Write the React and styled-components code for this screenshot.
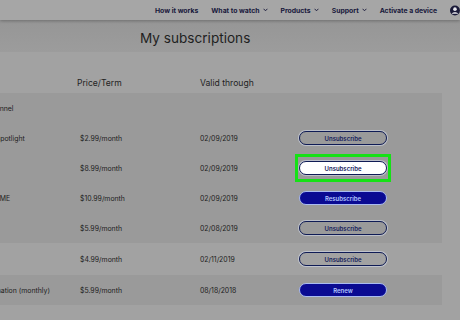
import React from "react";
import styled, { createGlobalStyle } from "styled-components";

const Global = createGlobalStyle`
  html, body {
    margin: 0;
    padding: 0;
    background: #a2a2a2;
    font-family: Inter, "Noto Sans", sans-serif;
    color: #1d1d1d;
    overflow: hidden;
  }
`;

const Page = styled.div`
  width: 460px;
  height: 320px;
  overflow: hidden;
  background: #a2a2a2;
`;

const Header = styled.header`
  position: relative;
  z-index: 1;
  height: 20px;
  background: #a6a6a6;
  box-shadow: 0 1px 3px rgba(0, 0, 0, 0.28);
  display: flex;
  align-items: center;
  gap: 13px;
  padding-left: 155px;
  white-space: nowrap;
`;

const NavItem = styled.span`
  display: flex;
  align-items: center;
  gap: 3px;
  font-size: 6.85px;
  font-weight: 700;
  color: #16163a;
`;

const TitleBand = styled.div`
  height: 32px;
  background: linear-gradient(#969696, #9c9c9c);
  display: flex;
  align-items: center;
  padding-left: 140px;
  padding-top: 4px;
  box-sizing: border-box;
`;

const Title = styled.h1`
  margin: 0;
  font-size: 13.6px;
  font-weight: 400;
  color: #1f1f1f;
`;

const Table = styled.div`
  margin-left: -46px;
  width: 488px;
`;

const HeadRow = styled.div`
  height: 41px;
  display: grid;
  grid-template-columns: 123px 123px 99px 88px;
  align-items: end;
  padding-bottom: 5px;
  box-sizing: border-box;
  font-size: 8.6px;
  color: #1f1f1f;
`;

const Panel = styled.div`
  background: ${(p) => (p.$dark ? "#9a9a9a" : "transparent")};
`;

const Row = styled.div`
  height: ${(p) => p.$h || 30}px;
  display: grid;
  grid-template-columns: 126px 120px 99px 88px;
  align-items: center;
  font-size: 6.9px;
  color: #1d1d1d;
  white-space: nowrap;
`;

const Button = styled.button`
  width: 88px;
  height: 14px;
  border-radius: 8px;
  font-family: inherit;
  font-size: 6px;
  font-weight: 600;
  padding: 0;
  cursor: pointer;
  border: ${(p) =>
    p.$variant === "filled" ? "1px solid #a9bbf2" : "1.5px solid #0f1b55"};
  background: ${(p) =>
    p.$variant === "filled"
      ? "#0a0a92"
      : p.$variant === "white"
      ? "#ffffff"
      : "transparent"};
  color: ${(p) => (p.$variant === "filled" ? "#b3c6ff" : "#14205a")};
  box-shadow: ${(p) =>
    p.$variant === "filled" ? "none" : "0 0 0 1px rgba(215,222,240,0.55)"};
`;

const Highlight = styled.span`
  display: inline-flex;
  margin-left: -4px;
  padding: 4px 1px;
  border: 3px solid #16e116;
`;

const Chevron = () => (
  <svg width="5" height="4" viewBox="0 0 5 4">
    <path d="M0.6 0.8 L2.5 2.8 L4.4 0.8" fill="none" stroke="#16163a" strokeWidth="0.9" />
  </svg>
);

const UserIcon = () => (
  <svg width="11" height="11" viewBox="0 0 11 11">
    <circle cx="5.5" cy="5.5" r="5.5" fill="#1a1a38" />
    <circle cx="5.5" cy="4" r="2" fill="#e8e8ee" />
    <path d="M2 9.2 C2.6 6.9 8.4 6.9 9 9.2 Z" fill="#e8e8ee" />
  </svg>
);

const rows = [
  { name: "Hallmark TV Spotlight", price: "$2.99/month", date: "02/09/2019", btn: "outline", label: "Unsubscribe" },
  { name: "STARZ", price: "$8.99/month", date: "02/09/2019", btn: "white", label: "Unsubscribe", mark: true },
  { name: "AMC SHOWTIME", price: "$10.99/month", date: "02/09/2019", btn: "filled", label: "Resubscribe" },
  { name: "EPIX", price: "$5.99/month", date: "02/08/2019", btn: "outline", label: "Unsubscribe" },
];

function Action({ r }) {
  const b = <Button $variant={r.btn}>{r.label}</Button>;
  return r.mark ? <Highlight>{b}</Highlight> : b;
}

export default function App() {
  return (
    <Page>
      <Global />
      <Header>
        <NavItem>How it works</NavItem>
        <NavItem>What to watch <Chevron /></NavItem>
        <NavItem>Products <Chevron /></NavItem>
        <NavItem>Support <Chevron /></NavItem>
        <NavItem>Activate a device</NavItem>
        <UserIcon />
      </Header>
      <TitleBand>
        <Title>My subscriptions</Title>
      </TitleBand>
      <Table>
        <HeadRow>
          <span />
          <span>Price/Term</span>
          <span>Valid through</span>
          <span />
        </HeadRow>
        <Panel $dark>
          <Row>
            <span>The Roku Channel</span>
          </Row>
          {rows.map((r) => (
            <Row key={r.name}>
              <span>{r.name}</span>
              <span>{r.price}</span>
              <span>{r.date}</span>
              <span><Action r={r} /></span>
            </Row>
          ))}
        </Panel>
        <Panel>
          <Row $h={32}>
            <span>Hulu</span>
            <span>$4.99/month</span>
            <span>02/11/2019</span>
            <span><Button $variant="outline">Unsubscribe</Button></span>
          </Row>
        </Panel>
        <Panel $dark>
          <Row>
            <span>Roku Film Donation (monthly)</span>
            <span>$5.99/month</span>
            <span>08/18/2018</span>
            <span><Button $variant="filled">Renew</Button></span>
          </Row>
        </Panel>
      </Table>
    </Page>
  );
}
